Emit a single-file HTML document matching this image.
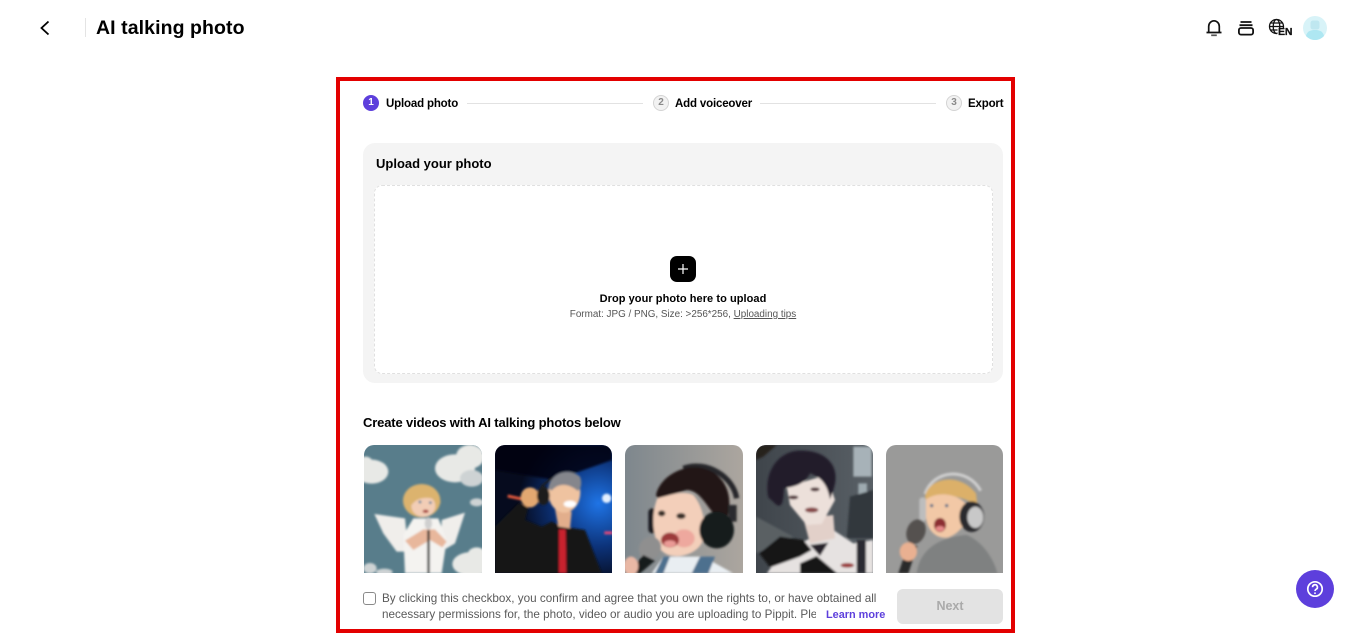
<!DOCTYPE html>
<html lang="en"><head><meta charset="utf-8"><title>AI talking photo</title>
<style>
*{box-sizing:border-box}
html,body{margin:0;padding:0;width:1365px;height:638px;overflow:hidden;background:#fff;font-family:"Liberation Sans",Arial,sans-serif;color:#000}
.a{position:absolute;white-space:nowrap}
.b{font-weight:700}
.num{position:absolute;top:95px;width:16px;height:16px;border-radius:50%;border:1.5px solid #d4d4d4;background:#f2f2f2;color:#8a8a8a;font-size:10px;font-weight:700;line-height:13px;text-align:center}
.line{position:absolute;top:103px;height:1px;background:#e2e2e2}
.step{position:absolute;top:96px;font-size:11.5px;line-height:14px;font-weight:700;white-space:nowrap;letter-spacing:-.17px;padding-top:.5px}
.ph{position:absolute;top:445px;height:128px;border-radius:10px 10px 0 0;overflow:hidden}
.ph svg{display:block}
</style></head><body>

<svg width="0" height="0" style="position:absolute"><defs>
<filter id="f" x="-5%" y="-5%" width="110%" height="110%"><feGaussianBlur stdDeviation="3.5"/></filter>
<radialGradient id="g2" gradientUnits="userSpaceOnUse" cx="730" cy="190" r="240"><stop offset="0" stop-color="#1f74e6"/><stop offset=".55" stop-color="#0c3278"/><stop offset="1" stop-color="#060b1e"/></radialGradient>
<linearGradient id="g3" x1="0" x2="1"><stop offset="0" stop-color="#7e878d"/><stop offset="1" stop-color="#aca69f"/></linearGradient>
<linearGradient id="g4" x1="0" x2="1" y1="0" y2="0"><stop offset="0" stop-color="#3f454b"/><stop offset="1" stop-color="#596066"/></linearGradient>
</defs></svg>

<svg class="a" style="left:36px;top:18px" width="18" height="20" viewBox="0 0 18 20"><path d="M12.500 3.500 L5.500 10 L12.500 16.500" fill="none" stroke="#000" stroke-width="1.800"/></svg>
<div class="a" style="left:85px;top:18px;width:1px;height:19px;background:#e4e4e4"></div>
<div class="a b" style="left:96px;top:16px;font-size:19.500px;line-height:24px;letter-spacing:.08px">AI talking photo</div>

<svg class="a" style="left:1204px;top:18px" width="20" height="20" viewBox="0 0 20 20" fill="none" stroke="#111" stroke-width="1.700"><path d="M2.500 14.500h15M4.700 14.500V8.500a5.300 5.700 0 0 1 10.600 0v6"/><path d="M7.200 17.300h5.600" stroke="#555"/></svg>
<svg class="a" style="left:1237px;top:19px" width="18" height="18" viewBox="0 0 18 18" fill="none" stroke="#111" stroke-width="1.800"><path d="M3.500 3h11M2.500 6.200h13"/><rect x="1.900" y="9" width="14.200" height="6.600" rx="2"/></svg>
<svg class="a" style="left:1268px;top:18px" width="26" height="22" viewBox="0 0 26 22" fill="none" stroke="#111" stroke-width="1.300"><circle cx="8.500" cy="8.500" r="7"/><ellipse cx="8.500" cy="8.500" rx="3.300" ry="7"/><path d="M1.500 8.500h14M2.500 5h12M2.500 12h12"/><rect x="9.500" y="10.500" width="16" height="11" fill="#fff" stroke="none"/></svg>
<div class="a b" style="left:1278px;top:27px;font-size:10.500px;line-height:11px;letter-spacing:-.1px;color:#111;-webkit-text-stroke:.3px #111">EN</div>
<svg class="a" style="left:1303px;top:16px" width="24" height="24" viewBox="0 0 24 24"><circle cx="12" cy="12" r="12" fill="#d8f3f8"/><rect x="7.500" y="4.500" width="9" height="9" rx="2.500" fill="#bfe7f0"/><path d="M3 20c1-5 5-6 9-6s8 1 9 6a12 12 0 0 1-18 0z" fill="#aee7f2"/></svg>

<div class="a" style="left:336px;top:77px;width:679px;height:556px;border:4px solid #e30000"></div>

<div class="a" style="left:363px;top:95px;width:16px;height:16px;border-radius:50%;background:#5d3fdc;color:#fff;font-size:10px;font-weight:700;line-height:16px;text-align:center">1</div>
<div class="step" style="left:386px">Upload photo</div>
<div class="line" style="left:467px;width:176px"></div>
<div class="num" style="left:653px">2</div>
<div class="step" style="left:675px">Add voiceover</div>
<div class="line" style="left:760px;width:176px"></div>
<div class="num" style="left:946px">3</div>
<div class="step" style="left:968px">Export</div>

<div class="a" style="left:363px;top:143px;width:640px;height:240px;background:#f4f4f4;border-radius:12px"></div>
<div class="a b" style="left:376px;top:156px;font-size:13px;line-height:16px">Upload your photo</div>
<div class="a" style="left:374px;top:185px;width:619px;height:189px;background:#fff;border:1px dashed #e0e0e0;border-radius:8px"></div>
<div class="a" style="left:670px;top:256px;width:26px;height:26px;background:#000;border-radius:7px"></div>
<svg class="a" style="left:670px;top:256px" width="26" height="26" viewBox="0 0 26 26"><path d="M13 8v10M8 13h10" stroke="#fff" stroke-width="1.200"/></svg>
<div class="a b" style="left:363px;width:640px;text-align:center;top:292px;font-size:11px;line-height:14px;letter-spacing:.06px">Drop your photo here to upload</div>
<div class="a" style="left:363px;width:640px;text-align:center;top:308px;font-size:9.900px;line-height:13px;color:#555">Format: JPG / PNG, Size: &gt;256*256, <span style="text-decoration:underline">Uploading tips</span></div>

<div class="a b" style="left:363px;top:415px;font-size:13px;line-height:16px;letter-spacing:-.15px">Create videos with AI talking photos below</div>

<div class="ph" style="left:364px;width:118px">
<svg width="118" height="128" viewBox="27 15 354 384"><rect x="27" y="15" width="354" height="384" fill="#587d8b"/><g filter="url(#f)">
<g fill="#e8e9e6"><ellipse cx="300" cy="85" rx="60" ry="42"/><ellipse cx="345" cy="50" rx="42" ry="36"/><ellipse cx="50" cy="95" rx="50" ry="36"/><ellipse cx="32" cy="70" rx="22" ry="20"/><ellipse cx="350" cy="372" rx="58" ry="36"/><ellipse cx="365" cy="342" rx="26" ry="20"/></g>
<g fill="#ced3d4"><ellipse cx="365" cy="187" rx="20" ry="12"/><ellipse cx="350" cy="115" rx="35" ry="25"/><ellipse cx="45" cy="385" rx="20" ry="16"/><ellipse cx="88" cy="396" rx="25" ry="10"/></g>
<path d="M58 222L150 235L160 335L125 335L85 280z" fill="#f0eeeb"/><path d="M330 218L260 240L258 335L300 310z" fill="#f0eeeb"/>
<path d="M145 285L175 235H250L275 300L260 400H150z" fill="#f4f3f0"/>
<path d="M150 302L205 268L240 268L275 305L262 322L225 300L175 330z" fill="#e8b79c"/>
<ellipse cx="200" cy="182" rx="56" ry="50" fill="#dcb36e"/><ellipse cx="205" cy="198" rx="36" ry="33" fill="#f2cdb6"/><path d="M150 185C165 150 245 145 258 190C240 170 190 165 170 195z" fill="#dcb36e"/>
<circle cx="195" cy="186" r="4" fill="#4c7a9c"/><circle cx="226" cy="188" r="4" fill="#4c7a9c"/><ellipse cx="212" cy="214" rx="9" ry="5" fill="#a8443f"/>
<ellipse cx="220" cy="250" rx="11" ry="18" fill="#cfcfcf"/><rect x="217" y="270" width="7" height="130" fill="#222"/></g></svg></div>

<div class="ph" style="left:495px;width:117px">
<svg width="117" height="128" viewBox="420 15 351 384"><rect x="420" y="15" width="351" height="384" fill="url(#g2)"/><g filter="url(#f)">
<path d="M420 15H771V60L600 120L420 90z" fill="#05070f" opacity=".85"/>
<circle cx="755" cy="175" r="14" fill="#e4f0ff"/><path d="M458 168L505 178" stroke="#e0583c" stroke-width="9"/><rect x="748" y="274" width="25" height="9" fill="#e0487a"/>
<rect x="420" y="340" width="60" height="60" fill="#1a2a5e"/><rect x="425" y="322" width="22" height="9" fill="#cfdcf0"/><rect x="470" y="340" width="20" height="8" fill="#3fb0c8"/><rect x="430" y="350" width="25" height="8" fill="#d04070"/>
<path d="M420 260L490 190L520 200L510 240L560 260L590 245L620 260L690 270L740 400H420z" fill="#141618"/>
<ellipse cx="525" cy="172" rx="28" ry="30" fill="#e3a871"/>
<path d="M600 205L650 215L645 265L610 260z" fill="#e2ae8c"/><ellipse cx="628" cy="158" rx="48" ry="60" fill="#efc3a0"/>
<path d="M580 145C585 100 640 80 675 110C685 135 672 160 665 150C640 130 610 128 590 152z" fill="#85868c"/>
<ellipse cx="565" cy="167" rx="19" ry="28" fill="#1c1c1e"/><path d="M558 140L590 115" stroke="#1c1c1e" stroke-width="6"/>
<ellipse cx="645" cy="192" rx="19" ry="10" fill="#fff"/>
<path d="M612 268H632L634 400H612z" fill="#c8212f"/></g></svg></div>

<div class="ph" style="left:625px;width:118px">
<svg width="118" height="128" viewBox="15 15 354 384"><rect x="15" y="15" width="354" height="384" fill="url(#g3)"/><g filter="url(#f)">
<path d="M190 85C260 60 340 110 350 175" fill="none" stroke="#26272a" stroke-width="16"/>
<path d="M108 165C120 110 190 70 250 85C310 100 345 160 320 240L285 225C260 200 240 150 200 150C170 160 130 170 115 178z" fill="#221815"/>
<rect x="85" y="205" width="26" height="75" rx="12" fill="#1d1e20"/>
<path d="M112 175C150 165 190 150 220 165C250 200 262 260 245 310C220 352 150 360 125 332C100 300 90 230 112 175z" fill="#f3cfba"/>
<ellipse cx="192" cy="295" rx="32" ry="27" fill="#eea89e"/>
<ellipse cx="125" cy="220" rx="11" ry="9" fill="#3b302c"/><ellipse cx="183" cy="228" rx="14" ry="9" fill="#3b302c"/>
<ellipse cx="150" cy="300" rx="27" ry="22" fill="#9c3a3a"/><ellipse cx="150" cy="311" rx="18" ry="10" fill="#ea9a95"/>
<rect x="325" y="195" width="25" height="50" fill="#2a2b2e"/><ellipse cx="290" cy="270" rx="52" ry="55" fill="#191a1c"/>
<path d="M95 400L130 350H250L340 400z" fill="#e9eef2"/><path d="M105 400L130 350H150L130 400zM215 400L240 350H285L265 400z" fill="#4d6f8e"/>
<ellipse cx="90" cy="325" rx="32" ry="36" fill="#8f8f8f" transform="rotate(35 90 325)"/><path d="M70 345L105 362L60 400H25z" fill="#191a1c"/><ellipse cx="33" cy="378" rx="22" ry="28" fill="#e9b8a5"/></g></svg></div>

<div class="ph" style="left:756px;width:117px">
<svg width="117" height="128" viewBox="408 15 351 384"><rect x="408" y="15" width="351" height="384" fill="url(#g4)"/><g filter="url(#f)">
<path d="M408 15H470L430 50L408 60z" fill="#28211f"/>
<rect x="700" y="20" width="55" height="90" fill="#a7b2b8"/><rect x="715" y="130" width="26" height="32" fill="#9eaab0"/><path d="M690 170L760 150V295H680z" fill="#33383c"/><path d="M408 230L520 290L408 340z" fill="#5a6064"/>
<path d="M440 400L470 360L560 300L640 270L700 310L760 300V400z" fill="#e6e2e1"/>
<path d="M550 235L640 225L645 295L570 310z" fill="#e2d0c9"/>
<path d="M500 140L620 105L645 180L605 252L560 255L510 195z" fill="#ece0da"/>
<path d="M445 172C430 90 480 32 540 32C620 30 665 80 640 150L630 178C622 130 600 110 570 100C550 140 510 140 492 145C490 172 490 205 470 195z" fill="#231b2a"/>
<ellipse cx="520" cy="172" rx="15" ry="6" fill="#553b3c"/><ellipse cx="585" cy="148" rx="14" ry="6" fill="#553b3c"/><ellipse cx="575" cy="210" rx="20" ry="8" fill="#87484a"/>
<path d="M418 340L480 290L550 300L575 330L540 350L450 382z" fill="#141416"/><path d="M540 370L590 348L652 400H540z" fill="#141416"/><path d="M570 315L625 308L600 348z" fill="#26242c"/>
<rect x="710" y="300" width="28" height="100" fill="#2b2c30"/><ellipse cx="682" cy="376" rx="20" ry="7" fill="#9c3e3e"/></g></svg></div>

<div class="ph" style="left:886px;width:117px">
<svg width="117" height="128" viewBox="18 15 351 384"><rect x="18" y="15" width="351" height="384" fill="#9a9a99"/><g filter="url(#f)">
<path d="M135 162C160 88 262 80 302 152" fill="none" stroke="#cfcfcf" stroke-width="9"/>
<path d="M110 400C120 320 190 290 260 285C300 300 340 350 352 400z" fill="#7f8181"/>
<path d="M135 172C140 118 232 90 288 160L292 195C250 172 190 152 140 182z" fill="#dcb069"/>
<path d="M138 178C180 150 240 165 260 195C272 240 240 280 205 292C170 300 140 270 138 230z" fill="#f2c8a6"/>
<circle cx="155" cy="197" r="5" fill="#5a7088"/><circle cx="200" cy="197" r="5" fill="#5a7088"/>
<ellipse cx="180" cy="255" rx="18" ry="21" fill="#8c2f30"/><ellipse cx="180" cy="266" rx="13" ry="8" fill="#e88a8a"/>
<ellipse cx="275" cy="230" rx="37" ry="46" fill="#2b2b2d"/><ellipse cx="286" cy="232" rx="24" ry="32" fill="#c8c8c8"/><rect x="118" y="172" width="20" height="72" rx="9" fill="#bdbdbd"/>
<ellipse cx="108" cy="275" rx="28" ry="38" fill="#55514f" transform="rotate(20 108 275)"/>
<path d="M85 310L112 318L85 400H55z" fill="#2c2c2c"/><ellipse cx="85" cy="335" rx="26" ry="28" fill="#e9b091"/></g></svg></div>

<div class="a" style="left:340px;top:573px;width:671px;height:55px;background:#fff"></div>
<div class="a" style="left:363px;top:592px;width:13px;height:13px;border:1px solid #8a8a8a;border-radius:3px;background:#fff"></div>
<div class="a" style="left:382px;top:591px;font-size:11.700px;line-height:16px;color:#5a5a5a">By clicking this checkbox, you confirm and agree that you own the rights to, or have obtained all</div>
<div class="a" style="left:382px;top:607px;width:434px;overflow:hidden;font-size:11.700px;line-height:16px;color:#5a5a5a">necessary permissions for, the photo, video or audio you are uploading to Pippit. Please review our terms</div>
<div class="a b" style="left:826px;top:607px;font-size:10.900px;line-height:16px;color:#5d3fdc">Learn more</div>
<div class="a b" style="left:897px;top:589px;width:106px;height:35px;background:#e3e3e3;border-radius:6px;color:#aaa;font-size:12.500px;line-height:35px;text-align:center">Next</div>

<div class="a" style="left:1296px;top:570px;width:38px;height:38px;border-radius:50%;background:#5d3fdc"></div>
<svg class="a" style="left:1305px;top:579px" width="20" height="20" viewBox="0 0 20 20" fill="none" stroke="#fff" stroke-width="1.700"><circle cx="10" cy="10" r="7.200"/><path d="M7.600 8.200a2.400 2.400 0 1 1 3.600 2c-.8.500-1.200.9-1.200 1.800"/><circle cx="10" cy="14.200" r=".5" fill="#fff" stroke-width=".8"/></svg>
</body></html>
